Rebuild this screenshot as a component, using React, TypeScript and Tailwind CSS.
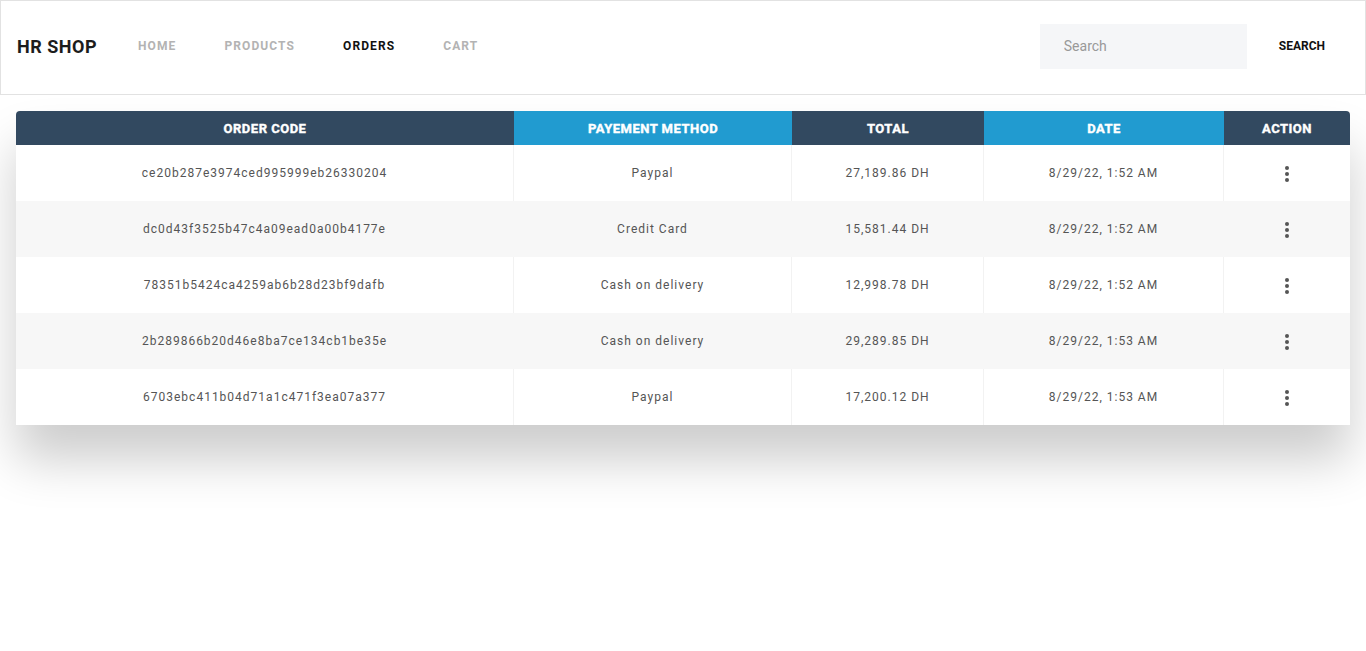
import React from 'react';

const ORDERS = [
  { code: 'ce20b287e3974ced995999eb26330204', method: 'Paypal', total: '27,189.86 DH', date: '8/29/22, 1:52 AM' },
  { code: 'dc0d43f3525b47c4a09ead0a00b4177e', method: 'Credit Card', total: '15,581.44 DH', date: '8/29/22, 1:52 AM' },
  { code: '78351b5424ca4259ab6b28d23bf9dafb', method: 'Cash on delivery', total: '12,998.78 DH', date: '8/29/22, 1:52 AM' },
  { code: '2b289866b20d46e8ba7ce134cb1be35e', method: 'Cash on delivery', total: '29,289.85 DH', date: '8/29/22, 1:53 AM' },
  { code: '6703ebc411b04d71a1c471f3ea07a377', method: 'Paypal', total: '17,200.12 DH', date: '8/29/22, 1:53 AM' },
];

const COLS = [
  { label: 'Order Code', bg: 'bg-[#324960]', w: 'w-[498px]' },
  { label: 'Payement Method', bg: 'bg-[#219bd0]', w: 'w-[278px]' },
  { label: 'Total', bg: 'bg-[#324960]', w: 'w-[192px]' },
  { label: 'Date', bg: 'bg-[#219bd0]', w: 'w-[240px]' },
  { label: 'Action', bg: 'bg-[#324960]', w: 'flex-1' },
];

const DotsIcon = () => (
  <svg width="6" height="18" viewBox="0 0 6 18" fill="#555">
    <circle cx="3" cy="3" r="2" />
    <circle cx="3" cy="9" r="2" />
    <circle cx="3" cy="15" r="2" />
  </svg>
);

const Navbar = () => {
  const links = ['Home', 'Products', 'Orders', 'Cart'];
  return (
    <header className="h-[95px] border border-[#e2e2e2] flex items-center pl-4 pr-10 pb-[3px]">
      <a className="text-[18px] font-bold text-[#1c1c1c] tracking-[0.5px] mr-[17px]">HR SHOP</a>
      <nav className="flex items-center">
        {links.map((l) => (
          <a
            key={l}
            className={`px-6 text-[12px] font-bold uppercase tracking-[1.1px] ${l === 'Orders' ? 'text-[#111]' : 'text-[#b3b3b3]'}`}
          >
            {l}
          </a>
        ))}
      </nav>
      <div className="ml-auto flex items-center">
        <input
          placeholder="Search"
          className="w-[207px] h-[45px] bg-[#f5f6f8] px-6 text-[14px] text-[#333] placeholder:text-[#999] outline-none"
        />
        <button className="ml-8 text-[12px] font-bold text-[#111] uppercase">Search</button>
      </div>
    </header>
  );
};

export default function App() {
  return (
    <div className="min-h-screen bg-white font-['Roboto',sans-serif]">
      <Navbar />
      <div className="mx-4 mt-4 rounded-t-[4px] overflow-hidden shadow-[0px_35px_50px_rgba(0,0,0,0.2)]">
        <div className="flex h-[34px]">
          {COLS.map((c) => (
            <div
              key={c.label}
              className={`${c.bg} ${c.w} flex items-center justify-center pt-px text-white text-[13px] font-bold tracking-[0.5px] uppercase [-webkit-text-stroke:0.4px_white]`}
            >
              {c.label}
            </div>
          ))}
        </div>
        {ORDERS.map((o, i) => {
          const cells = [o.code, o.method, o.total, o.date];
          return (
            <div key={o.code} className={`flex h-[56px] ${i % 2 ? 'bg-[#f7f7f7]' : 'bg-white'}`}>
              {cells.map((v, j) => (
                <div
                  key={j}
                  className={`${COLS[j].w} flex items-center justify-center text-[12px] tracking-[1px] text-[#555] border-r ${i % 2 ? 'border-transparent' : 'border-[#f2f2f2]'}`}
                >
                  {v}
                </div>
              ))}
              <div className="flex-1 flex items-center justify-center pt-px">
                <DotsIcon />
              </div>
            </div>
          );
        })}
      </div>
    </div>
  );
}
